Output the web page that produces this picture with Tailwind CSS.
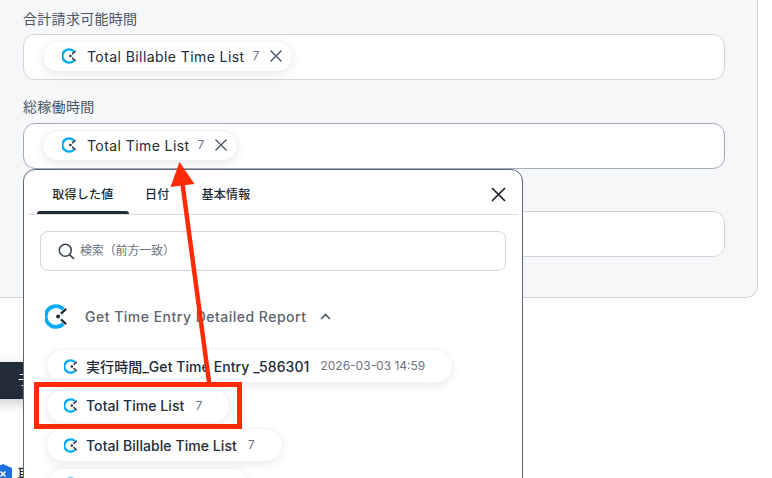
<!DOCTYPE html>
<html lang="ja"><head><meta charset="utf-8"><script src="https://cdn.jsdelivr.net/npm/@tailwindcss/browser@4"></script></head>
<body class="bg-white">
<svg width="0" height="0" class="absolute"><defs>
<symbol id="clk" viewBox="0 0 24 24"><path d="M17.6 4.9A10 10 0 1 0 17.6 19.1" fill="none" stroke="#03a9f4" stroke-width="3.6"/><circle cx="12.6" cy="12" r="1.9" fill="#222b38"/><path d="M15.3 9.2 20.3 4.6M15.3 14.8 20.3 19.4" fill="none" stroke="#222b38" stroke-width="2.2"/></symbol>
</defs></svg>
<div class="relative w-[772px] h-[478px] overflow-hidden bg-white font-['Inter','Noto_Sans_CJK_JP',sans-serif]">
  <div class="ml-[-20px] w-[778px] h-[298px] bg-[#f6f7f9] border-r border-b border-[#d1d5db] rounded-br-xl pl-[43px] pr-[32px] flex flex-col">
    <div class="h-[34px] flex items-center pt-[3px] text-[14px] tracking-[0.3px] text-[#4b5563]">合計請求可能時間</div>
    <div class="h-[46px] bg-white border border-[#d1d5db] rounded-xl flex items-center pl-[18px] pb-[2px]">
      <div class="h-[31px] flex items-center rounded-full bg-white shadow-[0_3px_10px_rgba(0,0,0,0.08)] border border-[#f1f2f4] pl-[19px] pr-[9px]">
        <svg class="w-[16px] h-[16px] mr-[9px]"><use href="#clk"/></svg>
        <span class="text-[14px] tracking-[0.42px] text-[#222b38]">Total Billable Time List</span>
        <span class="text-[12px] text-[#6b7280] ml-[8px]">7</span>
        <svg class="w-[14px] h-[14px] ml-[10px]" viewBox="0 0 14 14"><path d="M1.500 1.500 12.500 12.500M12.500 1.500 1.500 12.500" stroke="#4b5563" stroke-width="1.4"/></svg>
      </div>
    </div>
    <div class="h-[43px] flex items-center pt-[9px] text-[14px] tracking-[0.3px] text-[#4b5563]">総稼働時間</div>
    <div class="h-[46px] bg-white border border-[#a3abb8] rounded-xl flex items-center pl-[18px] pb-[2px]">
      <div class="h-[31px] flex items-center rounded-full bg-white shadow-[0_3px_10px_rgba(0,0,0,0.08)] border border-[#f1f2f4] pl-[19px] pr-[9px]">
        <svg class="w-[16px] h-[16px] mr-[9px]"><use href="#clk"/></svg>
        <span class="text-[14px] tracking-[0.42px] text-[#222b38]">Total Time List</span>
        <span class="text-[12px] text-[#6b7280] ml-[8px]">7</span>
        <svg class="w-[14px] h-[14px] ml-[10px]" viewBox="0 0 14 14"><path d="M1.500 1.500 12.500 12.500M12.500 1.500 1.500 12.500" stroke="#4b5563" stroke-width="1.4"/></svg>
      </div>
    </div>
    <div class="h-[46px] mt-[42px] bg-white border border-[#d1d5db] rounded-xl"></div>
  </div>

  <!-- things behind the popover -->
  <div class="absolute left-[-20px] top-[362px] w-[60px] h-[37px] rounded-xl bg-[#222b38] shadow-[0_4px_14px_rgba(0,0,0,0.2)]"><span class="absolute left-[38px] top-[8px] text-[13px] text-white">子</span></div>
  <svg class="absolute left-[-6px] top-[464px] w-[18px] h-[20px]" viewBox="0 0 18 20"><path d="M9 0 18 4V15L9 20 0 15V4Z" fill="#1d6fe0"/><path d="M6.500 7.500 11.500 12.500M11.500 7.500 6.500 12.500" stroke="#fff" stroke-width="1.6"/></svg>
  <span class="absolute left-[18px] top-[464px] text-[13px] text-[#222b38] font-medium">取</span>

  <!-- popover -->
  <div class="absolute left-[23px] top-[169px] w-[500px] h-[330px] bg-white border border-[#5f6774] rounded-t-xl">
    <div class="relative h-[45px] mx-[4px] border-b border-[#d9dde3] flex items-end pl-[9px] text-[12px] font-medium text-[#222b38] tracking-[0.25px]">
      <div class="w-[92px] h-[45px] flex items-center justify-center pt-[6px] relative">取得した値<span class="absolute left-0 right-0 bottom-0 h-[3px] rounded-t bg-[#222b38]"></span></div>
      <div class="ml-[16px] h-[45px] flex items-center pt-[6px]">日付</div>
      <div class="ml-[32px] h-[45px] flex items-center pt-[6px]">基本情報</div>
      <svg class="absolute right-[12px] top-[17px] w-[15px] h-[15px]" viewBox="0 0 15 15"><path d="M1 1 14 14M14 1 1 14" stroke="#1a1f27" stroke-width="1.7"/></svg>
    </div>
    <div class="mx-[16px] mt-[16px] h-[40px] border border-[#d1d5db] rounded-lg flex items-center pl-[17px]">
      <svg class="w-[17px] h-[17px] mr-[5px]" viewBox="0 0 17 17"><circle cx="7.300" cy="7.300" r="6" fill="none" stroke="#374151" stroke-width="1.500"/><path d="M11.600 11.600 16 16" stroke="#374151" stroke-width="1.600"/></svg>
      <span class="text-[12px] text-[#6b7280] tracking-[-0.15px]">検索（前方一致）</span>
    </div>
    <div class="flex items-center ml-[21px] mt-[30px] h-[30px]">
      <svg class="w-[25px] h-[25px] mr-[15px]"><use href="#clk"/></svg>
      <span class="text-[14px] font-medium tracking-[0.49px] text-[#5b6472]">Get Time Entry Detailed Report</span>
      <svg class="w-[11px] h-[7px] ml-[14px]" viewBox="0 0 11 7"><path d="M1 6 5.500 1.500 10 6" fill="none" stroke="#4b5563" stroke-width="1.6"/></svg>
    </div>
    <div class="flex flex-col items-start gap-[5.500px] ml-[22px] mt-[18px]">
      <div class="h-[34px] w-[407px] flex items-center rounded-full bg-white border border-[#f1f2f4] shadow-[0_3px_10px_rgba(0,0,0,0.08)] pl-[17px]">
        <svg class="w-[15px] h-[15px] mr-[7px]"><use href="#clk"/></svg>
        <span class="text-[14px] font-medium text-[#222b38] tracking-[0.07px]">実行時間_Get Time Entry _586301</span>
        <span class="text-[12px] text-[#6b7280] ml-[11px]">2026-03-03 14:59</span>
      </div>
      <div class="h-[34px] w-[184px] flex items-center rounded-full bg-white border border-[#f1f2f4] shadow-[0_3px_10px_rgba(0,0,0,0.08)] pl-[17px]">
        <svg class="w-[15px] h-[15px] mr-[7px]"><use href="#clk"/></svg>
        <span class="text-[14px] font-medium text-[#222b38] tracking-[0.07px]">Total Time List</span>
        <span class="text-[12px] text-[#6b7280] ml-[11px]">7</span>
      </div>
      <div class="h-[34px] w-[237px] flex items-center rounded-full bg-white border border-[#f1f2f4] shadow-[0_3px_10px_rgba(0,0,0,0.08)] pl-[17px]">
        <svg class="w-[15px] h-[15px] mr-[7px]"><use href="#clk"/></svg>
        <span class="text-[14px] font-medium text-[#222b38] tracking-[0.07px]">Total Billable Time List</span>
        <span class="text-[12px] text-[#6b7280] ml-[11px]">7</span>
      </div>
      <div class="h-[34px] w-[204px] flex items-center rounded-full bg-white border border-[#f1f2f4] shadow-[0_3px_10px_rgba(0,0,0,0.08)] pl-[17px]">
        <svg class="w-[15px] h-[15px] mr-[7px]"><use href="#clk"/></svg>
      </div>
    </div>
  </div>

  <!-- annotation -->
  <svg class="absolute left-0 top-0 w-[772px] h-[478px] pointer-events-none" viewBox="0 0 772 478">
    <path d="M209.300 384 182.500 184" fill="none" stroke="#ff2a06" stroke-width="4.500"/>
    <path d="M179.500 162 194.500 184 170.500 187Z" fill="#ff2a06"/>
    <rect x="36.500" y="384.500" width="203" height="42" fill="none" stroke="#ff2a06" stroke-width="5"/>
  </svg>
</div>
</body></html>
